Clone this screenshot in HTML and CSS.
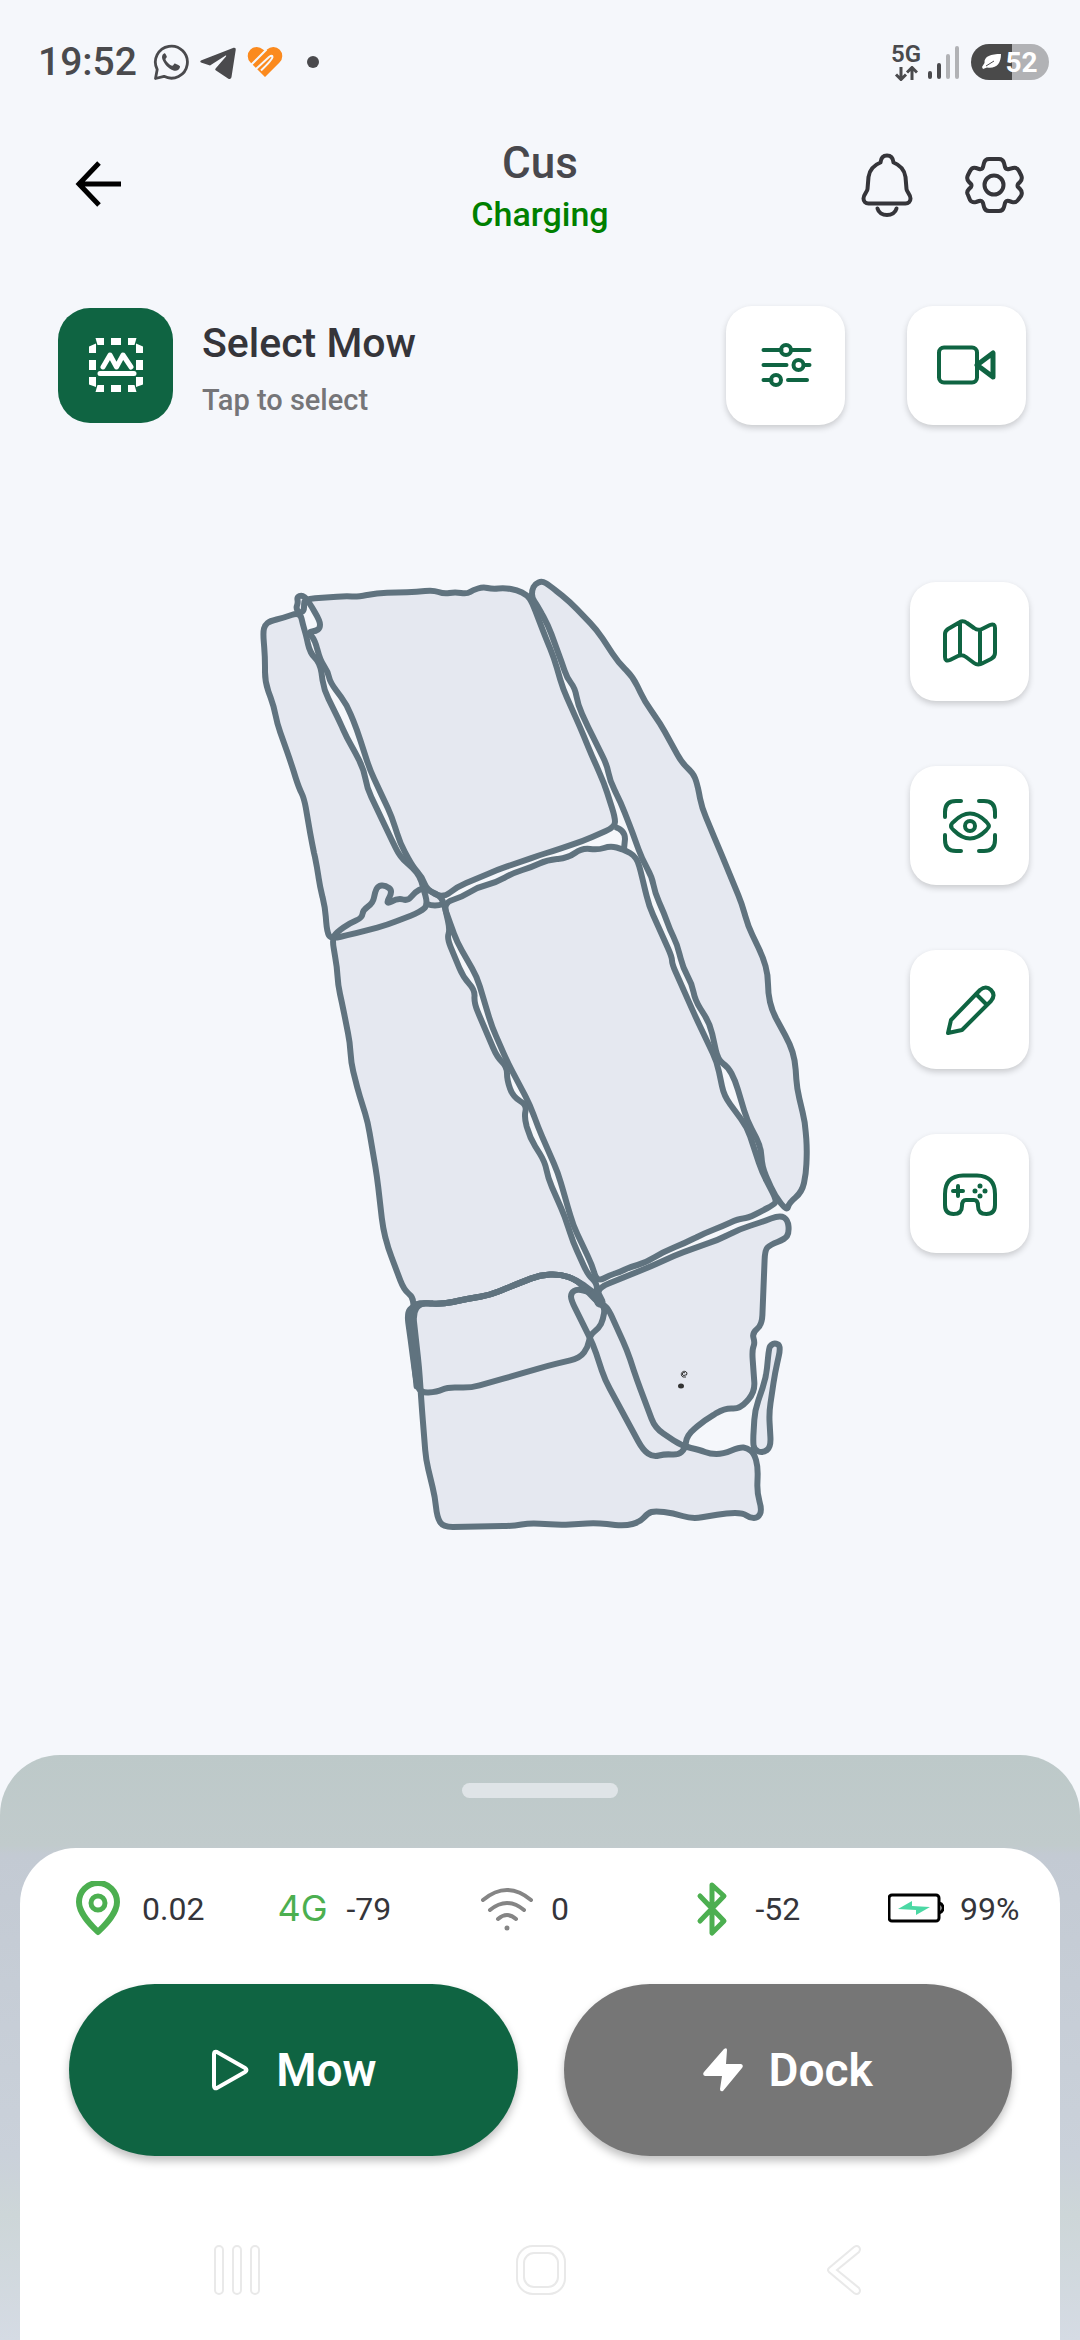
FILE: index.html
```
<!DOCTYPE html>
<html lang="en">
<head>
    <meta charset="UTF-8">
    <meta name="viewport" content="width=device-width, initial-scale=1.0">
    <title>Cus</title>
    <link rel="stylesheet" href="styles.css">
</head>
<body>
    <div class="status-bar">
        <span class="clock">19:52</span>
        <svg class="note-icon" viewBox="0 0 36 38">
            <path d="M2.500 35.500 4.200 26.500A16 16 0 1 1 11 33.300Z" fill="none" stroke="#4a4a4d" stroke-width="2.800" stroke-linejoin="round"/>
            <path d="M11 10.500c-2 1-2.500 3.500-1.500 6 2 5 6 9 11 11 3 1 6-.5 6.500-3.500.2-1-.3-1.500-5-3.500-1-.4-1.600 2.300-2.800 2.300-2 0-6.200-4.300-6.700-6.200-.3-1 1.700-1.800 1.300-3-1.500-3.700-1.800-3.600-2.800-3.100Z" fill="#4a4a4d"/>
        </svg>
        <svg class="note-icon" viewBox="0 0 36 38">
            <path d="M1 19.500C0 19 0 18 1.500 17.300L33 5c2-.7 3 .2 2.700 2L31.500 34c-.4 2-1.900 2.500-3.500 1.400L16 27.500c-1-.7-1-1.300-.2-2.200L26 13.500c.5-.8 0-1.200-.8-.7L10 22.500Z" fill="#4a4a4d"/>
        </svg>
        <svg class="note-icon" viewBox="0 0 36 38">
            <path d="M18 34 3.500 19.500A8.800 8.800 0 0 1 16 6.500l2 1.500 2-1.500A8.800 8.800 0 0 1 32.500 19.500Z" fill="#fb8a1e"/>
            <path d="M4 22 19.500 6.500M8.500 26.500 22 14q3.500-2.500 3.500 0T14 27.500" fill="none" stroke="#f5f7fb" stroke-width="2"/>
        </svg>
        <span class="note-dot"></span>
        <div class="network">
            <span>5G</span>
            <svg width="24" height="15" viewBox="0 0 24 15">
                <path d="M7 1v12M2 8.500l5 5 5-5M18 14V2M13 6.500l5-5 5 5" fill="none" stroke="#4a4a4d" stroke-width="3"/>
            </svg>
        </div>
        <svg class="signal" width="32" height="36" viewBox="0 0 32 36">
            <path d="M3 29v4M12 21v12" stroke="#4a4a4d" stroke-width="4" stroke-linecap="round"/>
            <path d="M21 12v21M30 4v29" stroke="#b1b2b5" stroke-width="4" stroke-linecap="round"/>
        </svg>
        <div class="phone-battery">
            <svg width="19" height="16" viewBox="0 0 19 16">
                <path d="M19 0C9 0 2 2 2.500 9L0 13l1 2 4-1.500C14 15 19 10 19 0Z" fill="#fff"/>
                <path d="M4 12 12 7" stroke="#4a4a4d" stroke-width="1"/>
            </svg>
            <span>52</span>
        </div>
    </div>

    <header class="top-bar">
        <button class="plain-btn" aria-label="Back">
            <svg width="48" height="48" viewBox="0 0 48 48">
                <path d="M25 2 5 23l20 21M5 23h42" fill="none" stroke="#000" stroke-width="5"/>
            </svg>
        </button>
        <div class="title">
            <h1>Cus</h1>
            <p>Charging</p>
        </div>
        <div class="top-actions">
            <button class="plain-btn" aria-label="Notifications">
                <svg width="52" height="64" viewBox="0 0 52 64">
                    <path d="M19.500 9.500C20 4.500 22.500 2.500 26 2.500s6 2 6.500 7C39 12 43.500 17 44.500 24l1 12c.2 3 4 5.500 4 9.500 0 3-2 5-5 5h-37c-3 0-5-2-5-5 0-4 3.800-6.500 4-9.500l1-12c1-7 5.500-12 12-14.500Z"/>
                    <path d="M16.500 55.500c1 4 5 6.500 9.500 6.500s8.500-2.500 9.500-6.500"/>
                </svg>
            </button>
            <button class="plain-btn" aria-label="Settings">
                <svg width="60" height="60" viewBox="0 0 60 60">
                    <path d="M25 4h10q4 0 5 4l1 4q1 3 4 2l4-1q4-1 6 3l2 4q2 4-1 7l-2 2q-1 2 0 3l2 2q3 3 1 7l-3 4q-2 3-6 2l-3-1q-3-1-4 2l-1 4q-1 4-5 4H25q-4 0-5-4l-1-4q-1-3-4-2l-3 1q-4 1-6-2l-2-5q-2-3 1-6l2-2q1-2 0-3l-2-2q-3-3-1-7l2-4q2-4 6-3l3 1q3 1 4-2l1-4q1-4 5-4Z"/>
                    <circle cx="30" cy="30" r="9.500"/>
                </svg>
            </button>
        </div>
    </header>

    <section class="mode-row">
        <button class="mode-btn" aria-label="Select mow area">
            <svg width="56" height="56" viewBox="0 0 56 56">
                <path d="M7.500 1H16v7H9.500ZM23 1h10v7H23ZM40 1h8.500L46.500 8H40ZM1 9.500 8 6.500V16H1ZM1 23h7v10H1ZM1 40h7v10L1 47.500ZM48 6.500l7 3V16h-7ZM48 23h7v10h-7ZM48 40h7v7.500L48 50ZM9.500 48H16v7H7.500ZM23 48h10v7H23ZM40 48h6.500l2 7H40Z" fill="#fff"/>
                <path d="m15 30 7-12 6.500 12L35 18l8 12M12 36.500h34" fill="none" stroke="#fff" stroke-width="5" stroke-linecap="round" stroke-linejoin="round"/>
            </svg>
        </button>
        <div class="mode-text">
            <h2>Select Mow</h2>
            <p>Tap to select</p>
        </div>
        <div class="mode-actions">
            <button class="tile" aria-label="Mowing options">
                <svg viewBox="0 0 60 60">
                    <path d="M7.500 15h18M36 15h17.500M7.500 30h23M48 30h5.500M7.500 45h8M32 45h19"/>
                    <circle cx="30" cy="15" r="5"/><circle cx="42.500" cy="30" r="5"/><circle cx="20" cy="45" r="5"/>
                </svg>
            </button>
            <button class="tile" aria-label="Camera">
                <svg viewBox="0 0 60 60">
                    <rect x="2" y="12.500" width="38" height="35" rx="5"/>
                    <path d="m40 30 16-12v24Z" stroke-width="5"/>
                </svg>
            </button>
        </div>
    </section>

    <main class="map">
        <svg class="zones" viewBox="0 560 1080 1000">
            <defs>
                <g id="zones">
                    <!-- top left strip -->
                    <path data-points="300,612 283,618 270,621 265,625 263,632 265,657 265,682 274,707 277,723 290,760 299,788 304,798 312,843 317,867 320,887 325,907 327,932 331,939 357,933 387,925 420,912 428,905 423,887 420,877 413,868 400,857 387,830 367,788 364,770 355,752 347,738 338,718 324,690 320,663 310,653 306,635 303,625"/>
                    <!-- top field -->
                    <path data-points="305,599 347,596 357,597 377,593 417,592 433,590 444,594 455,592 467,594 473,590 483,587 492,589 505,588 517,590 527,595 532,602 543,631 554,658 563,689 580,727 592,756 604,783 615,817 615,827 583,841 553,851 540,855 497,870 457,887 443,898 427,890 422,877 413,867 400,843 392,817 378,787 370,770 357,730 347,705 330,682 328,672 320,660 315,640 308,632 316,631 320,628 320,621 307,599 302,595 297,597 298,603 296,608 299,613 304,611 304,604"/>
                    <!-- right crescent -->
                    <path data-points="532,598 532,590 535,584 542,581 549,585 570,602 597,630 618,662 633,677 645,702 660,723 682,763 693,773 697,783 702,808 718,846 742,904 748,926 763,957 768,975 768,993 772,1011 790,1044 795,1060 797,1089 805,1122 807,1149 806,1174 802,1192 789,1203 787,1211 775,1196 762,1167 761,1147 747,1120 735,1080 728,1067 718,1060 710,1024 695,1000 692,984 683,968 677,944 670,930 664,913 655,893 652,877 642,859 633,834 621,803 610,781 607,765 588,727 578,705 575,688 567,678 562,663 548,625 537,605"/>
                    <!-- centre field -->
                    <path data-points="443,903 462,897 478,887 495,883 513,873 532,867 547,860 568,858 582,848 598,850 610,846 623,849 637,857 643,881 649,906 672,957 672,964 697,1020 717,1062 724,1096 747,1127 762,1172 777,1201 773,1205 762,1211 748,1218 738,1219 723,1226 705,1233 685,1243 663,1252 645,1263 630,1267 620,1272 610,1275 597,1282 592,1265 573,1225 565,1197 558,1173 538,1127 530,1105 508,1063 492,1027 477,977 457,942 450,923"/>
                    <!-- left field -->
                    <path data-points="332,939 337,932 350,923 362,918 363,910 373,903 375,892 378,886 385,885 393,891 385,905 398,898 408,901 415,892 423,888 435,893 443,899 450,930 447,938 463,977 475,990 474,1003 497,1057 507,1067 507,1080 513,1097 527,1105 524,1117 530,1138 545,1162 548,1178 565,1217 573,1242 588,1275 597,1283 597,1295 590,1290 577,1280 560,1274 540,1275 517,1284 490,1295 467,1299 443,1304 420,1303 413,1306 413,1297 404,1290 388,1248 383,1228 377,1177 368,1123 357,1087 351,1062 350,1043 342,1003 338,985 337,967"/>
                    <!-- bottom left block -->
                    <path data-points="413,1306 420,1303 443,1304 467,1299 490,1295 517,1284 540,1275 560,1274 577,1280 593,1295 598,1303 605,1307 603,1320 599,1328 590,1335 588,1347 580,1358 547,1366 513,1376 470,1388 448,1387 437,1392 420,1393 416,1380 412,1350 407,1313"/>
                    <!-- bottom field -->
                    <path data-points="413,1313 419,1367 422,1410 426,1460 435,1497 437,1517 443,1527 513,1526 530,1523 560,1525 597,1523 625,1526 640,1522 648,1513 655,1511 673,1513 692,1519 727,1513 743,1513 750,1518 758,1518 762,1510 757,1493 758,1467 754,1453 747,1448 740,1447 723,1454 710,1454 700,1450 682,1446 655,1428 637,1380 627,1350 607,1306 598,1303 577,1280 560,1274 540,1275 517,1284 490,1295 467,1299 443,1304 420,1303"/>
                    <!-- bottom right field -->
                    <path data-points="597,1296 590,1292 577,1289 571,1293 571,1300 593,1344 605,1380 643,1450 653,1457 665,1454 678,1455 685,1449 687,1435 705,1420 725,1408 740,1409 755,1392 752,1350 755,1343 752,1333 762,1325 765,1250 770,1245 785,1239 789,1233 788,1220 780,1215 762,1222 740,1229 718,1240 683,1252 647,1268 600,1287"/>
                    <!-- narrow strip -->
                    <path data-points="771,1345 775,1343 781,1346 775,1373 769,1413 771,1447 763,1453 754,1450 753,1440 755,1410 766,1378 769,1348"/>
                </g>
            </defs>
            <use href="#zones" class="zone-fill"/>
            <use href="#zones" class="zone-line"/>
            <path class="zone-line" d="M427 904q8 3 16 0M615 827q10 3 10 12l-1 10"/>
            <path d="M596 1294l4 8" stroke="#60737f" stroke-width="11" stroke-linecap="round"/>
            <path d="M410 1314l7 72" stroke="#60737f" stroke-width="7" stroke-linecap="round"/>
            <!-- dock and mower -->
            <path d="M685 1373a1.500 1.500 0 1 0 0 2q2 1 2-2a3 3 0 1 0-4 4h3" fill="none" stroke="#333" stroke-width="1"/>
            <ellipse cx="681" cy="1386" rx="3" ry="2.500" fill="#333"/>
        </svg>
        <nav class="map-tools">
            <button class="tile" aria-label="Map">
                <svg viewBox="0 0 60 60">
                    <path d="M20 10 8 17q-3 2-3 5v23q0 5 5 3l8-4q4-2 8 1l8 6q4 3 9 0l8-4q4-2 4-6V16q0-5-5-3l-8 4q-4 2-8-1l-7-5q-4-3-7-1ZM20 11v31M40 19v32"/>
                </svg>
            </button>
            <button class="tile" aria-label="View">
                <svg viewBox="0 0 60 60">
                    <path d="M5 21v-5Q5 5 16 5h5M39 5h5q11 0 11 11v5M55 39v5q0 11-11 11h-5M21 55h-5Q5 55 5 44v-5M11.500 30Q10 29 14 25.500Q22 17.500 30 17.500t16 8q4 4.500 2.500 4.500 1.500 0-2.500 4.500-8 8-16 8t-16-8Q10 31 11.500 30Z"/>
                    <circle cx="30" cy="30" r="5"/>
                </svg>
            </button>
            <button class="tile" aria-label="Edit">
                <svg viewBox="0 0 60 60">
                    <path d="M8 53 11 40 40 10q6-5 11 0t0 11L22 50ZM36 14l11 11"/>
                </svg>
            </button>
            <button class="tile" aria-label="Remote control">
                <svg viewBox="0 0 60 60">
                    <path d="M23 11.500h14Q55 12 55 30v11q0 9-8.500 9T38 42q0-6-4-6h-8q-4 0-4 6 0 8-8.500 8T5 41V30q0-18 18-18.500ZM13 27h10M18 22v10"/>
                    <path d="M40 22v.01M40 32v.01M35 27v.01M45 27v.01" stroke-width="5"/>
                </svg>
            </button>
        </nav>
    </main>

    <footer class="sheet">
        <div class="handle"></div>
        <div class="card">
            <ul class="stats">
                <li>
                    <svg viewBox="0 0 56 56">
                        <path d="M28 51C22 45 9 33 9 21a19 19 0 0 1 38 0c0 12-13 24-19 30Z" fill="none" stroke="#4caf50" stroke-width="6" stroke-linejoin="round"/>
                        <circle cx="28" cy="22" r="7" fill="none" stroke="#4caf50" stroke-width="5"/>
                    </svg>
                    <span>0.02</span>
                </li>
                <li>
                    <b>4G</b>
                    <span>-79</span>
                </li>
                <li>
                    <svg viewBox="0 0 56 56">
                        <path d="M4 19q24-20 48 0M11 29q17-14 34 0M19 38q9-8 18 0" fill="none" stroke="#858585" stroke-width="4" stroke-linecap="round"/>
                        <circle cx="28" cy="47" r="2.500" fill="#858585"/>
                    </svg>
                    <span>0</span>
                </li>
                <li>
                    <svg viewBox="0 0 56 56">
                        <path d="m16 15 24 25-12 12V4l12 11-24 25" fill="none" stroke="#4caf50" stroke-width="5" stroke-linecap="round" stroke-linejoin="round"/>
                    </svg>
                    <span>-52</span>
                </li>
                <li>
                    <svg viewBox="0 0 56 56">
                        <rect x="1" y="14" width="50" height="26" rx="3" fill="none" stroke="#000" stroke-width="3"/>
                        <path d="M51 22q4 1 4 5t-4 5" fill="none" stroke="#000" stroke-width="3"/>
                        <path d="m10 28 14-8v5l18 1-14 8v-5Z" fill="#4bd8a4"/>
                    </svg>
                    <span>99%</span>
                </li>
            </ul>
            <div class="actions">
                <button class="action mow">
                    <svg width="40" height="44" viewBox="0 0 40 44">
                        <path d="M4 6q0-3 3-2l28 16q3 2 0 4L7 40q-3 1-3-2Z" fill="none" stroke="#fff" stroke-width="4"/>
                    </svg>
                    Mow
                </button>
                <button class="action dock">
                    <svg width="40" height="44" viewBox="0 0 40 44">
                        <path d="M21 1q3-2 3 1l-1 14h15q3 1 1 4L20 43q-3 1-3-2l2-13H2q-3-1-1-4Z" fill="#fff"/>
                    </svg>
                    Dock
                </button>
            </div>
            <nav class="phone-nav">
                <button class="plain-btn" aria-label="Recent apps">
                    <svg width="52" height="52" viewBox="0 0 52 52">
                        <rect x="4" y="2" width="8" height="48" rx="4"/><rect x="22" y="2" width="8" height="48" rx="4"/><rect x="40" y="2" width="8" height="48" rx="4"/>
                    </svg>
                </button>
                <button class="plain-btn" aria-label="Home">
                    <svg width="52" height="52" viewBox="0 0 52 52">
                        <rect x="2" y="2" width="48" height="48" rx="16"/><rect x="9" y="9" width="34" height="34" rx="10"/>
                    </svg>
                </button>
                <button class="plain-btn" aria-label="Back">
                    <svg width="52" height="52" viewBox="0 0 52 52">
                        <path d="M36 3 11 24q-2 2 0 4l25 21q3 2 5 0t0-5L19 26 41 8q2-3 0-5t-5 0Z"/>
                    </svg>
                </button>
            </nav>
        </div>
    </footer>

    <script>
        // turn each zone's boundary points into a closed path with rounded corners
        function toward(from, to, radius) {
            const dx = to[0] - from[0];
            const dy = to[1] - from[1];
            const t = Math.min(0.5, radius / Math.hypot(dx, dy));
            return (from[0] + dx * t).toFixed(1) + ' ' + (from[1] + dy * t).toFixed(1);
        }

        document.querySelectorAll('#zones path').forEach(path => {
            const points = path.dataset.points.split(' ').map(p => p.split(',').map(Number));
            const n = points.length;
            let d = '';
            points.forEach((point, i) => {
                const prev = points[(i + n - 1) % n];
                const next = points[(i + 1) % n];
                d += (i ? 'L' : 'M') + toward(point, prev, 10) + 'Q' + point.join(' ') + ' ' + toward(point, next, 10);
            });
            path.setAttribute('d', d + 'Z');
        });
    </script>
</body>
</html>
```
FILE: styles.css
```
* {
    box-sizing: border-box;
}

body {
    display: flex;
    flex-direction: column;
    min-height: 100vh;
    margin: 0;
    background-color: #f5f7fb;
    color: #35353a;
    font-family: Roboto, "Liberation Sans", sans-serif;
}

h1, h2, p {
    margin: 0;
    font-weight: 500;
}

svg {
    display: block;
}

button {
    padding: 0;
    border: none;
    font-family: inherit;
    cursor: pointer;
}

.plain-btn {
    background: none;
}

/* phone status bar */
.status-bar {
    display: flex;
    align-items: center;
    height: 124px;
    padding: 0 31px 0 38px;
    color: #4a4a4d;
}

.clock {
    margin-right: 16px;
    font-size: 39px;
    font-weight: 500;
}

.note-icon {
    width: 36px;
    height: 38px;
    margin-right: 11px;
}

.note-dot {
    width: 12px;
    height: 12px;
    margin-left: 13px;
    border-radius: 50%;
    background-color: #4a4a4d;
}

.network {
    display: flex;
    flex-direction: column;
    align-items: center;
    gap: 2px;
    margin-left: auto;
    font-size: 24px;
    font-weight: 600;
    line-height: 20px;
}

.signal {
    margin: 0 12px 0 6px;
}

.phone-battery {
    display: flex;
    align-items: center;
    justify-content: center;
    gap: 4px;
    width: 78px;
    height: 36px;
    border-radius: 18px;
    background: linear-gradient(to right, #4a4a4a 52%, #b1b2b5 52%);
    color: #fff;
    font-size: 28px;
    font-weight: 700;
}

/* header */
.top-bar {
    display: grid;
    grid-template-columns: 1fr auto 1fr;
    align-items: center;
    height: 122px;
    padding: 0 56px 0 74px;
}

.title {
    margin-right: 18px;
    padding-top: 2px;
    text-align: center;
}

.title h1 {
    color: #48484d;
    font-size: 44px;
    line-height: 56px;
}

.title p {
    color: #008000;
    font-size: 34px;
    line-height: 46px;
}

.top-bar > .plain-btn {
    justify-self: start;
}

.top-actions {
    display: flex;
    align-items: center;
    justify-content: flex-end;
    gap: 51px;
}

.top-actions svg {
    fill: none;
    stroke: #35353a;
    stroke-width: 4;
    stroke-linecap: round;
    stroke-linejoin: round;
}

/* mow mode */
.mode-row {
    display: flex;
    align-items: center;
    height: 120px;
    margin-top: 59px;
    padding: 0 54px 0 58px;
}

.mode-btn {
    display: grid;
    place-items: center;
    width: 115px;
    height: 115px;
    border-radius: 32px;
    background-color: #0f6442;
}

.mode-text {
    margin-left: 29px;
    padding-top: 6px;
}

.mode-text h2 {
    font-size: 41px;
    line-height: 64px;
}

.mode-text p {
    color: #757578;
    font-size: 29px;
    line-height: 50px;
}

.mode-actions {
    display: flex;
    gap: 62px;
    margin-left: auto;
}

.tile {
    display: grid;
    place-items: center;
    width: 119px;
    height: 119px;
    border-radius: 26px;
    background-color: #fff;
    box-shadow: 0 3px 6px rgba(0, 0, 0, 0.18);
}

.tile svg {
    width: 60px;
    height: 60px;
    fill: none;
    stroke: #0f6442;
    stroke-width: 4;
    stroke-linecap: round;
    stroke-linejoin: round;
}

/* map: the tool column sits in the same cell as the drawing */
.map {
    display: grid;
    margin-top: 135px;
}

.zones,
.map-tools {
    grid-area: 1 / 1;
}

.zones {
    width: 100%;
}

.zone-fill {
    fill: #e5e8f0;
}

.zone-line {
    fill: none;
    stroke: #60737f;
    stroke-width: 6;
    stroke-linejoin: round;
}

.map-tools {
    display: flex;
    flex-direction: column;
    gap: 65px;
    justify-self: end;
    align-self: start;
    padding: 22px 51px 0 0;
}

/* bottom sheet */
.sheet {
    margin-top: auto;
    padding: 28px 20px 0;
    border-radius: 60px 60px 0 0;
    background: linear-gradient(#bdc9c9, #c1cbcc 90px, #c3cad3 100px, #cad1da 400px, #cdd6d8 460px, #d5dbe4);
}

.handle {
    width: 156px;
    height: 15px;
    margin: 0 auto 50px;
    border-radius: 8px;
    background-color: #dfe4e7;
}

.card {
    padding: 32px 48px 20px 49px;
    border-radius: 56px 56px 0 0;
    background-color: #fff;
}

.stats {
    display: grid;
    grid-template-columns: repeat(4, 1fr) 132px;
    margin: 0 -8px 0 1px;
    padding: 0;
    list-style: none;
}

.stats li {
    display: flex;
    align-items: center;
    gap: 16px;
    height: 58px;
    font-size: 32px;
    white-space: nowrap;
}

.stats svg,
.stats b {
    flex: none;
    width: 56px;
    height: 56px;
}

.stats b {
    color: #4caf50;
    font-family: Inter, sans-serif;
    font-size: 36px;
    font-weight: 400;
    line-height: 54px;
    text-align: center;
}

.actions {
    display: grid;
    grid-template-columns: 1fr 1fr;
    gap: 46px;
    margin-top: 46px;
}

.action {
    display: flex;
    align-items: center;
    justify-content: center;
    gap: 26px;
    height: 172px;
    border-radius: 86px;
    color: #fff;
    font-size: 46px;
    font-weight: 600;
    box-shadow: 0 5px 8px rgba(0, 0, 0, 0.25);
}

.mow {
    background-color: #0f6442;
}

.dock {
    background-color: #767676;
}

.phone-nav {
    display: flex;
    justify-content: space-between;
    margin: 88px 142px 0 142px;
    padding-bottom: 24px;
}

.phone-nav svg {
    fill: none;
    stroke: #e9e9e9;
    stroke-width: 2;
}
```
